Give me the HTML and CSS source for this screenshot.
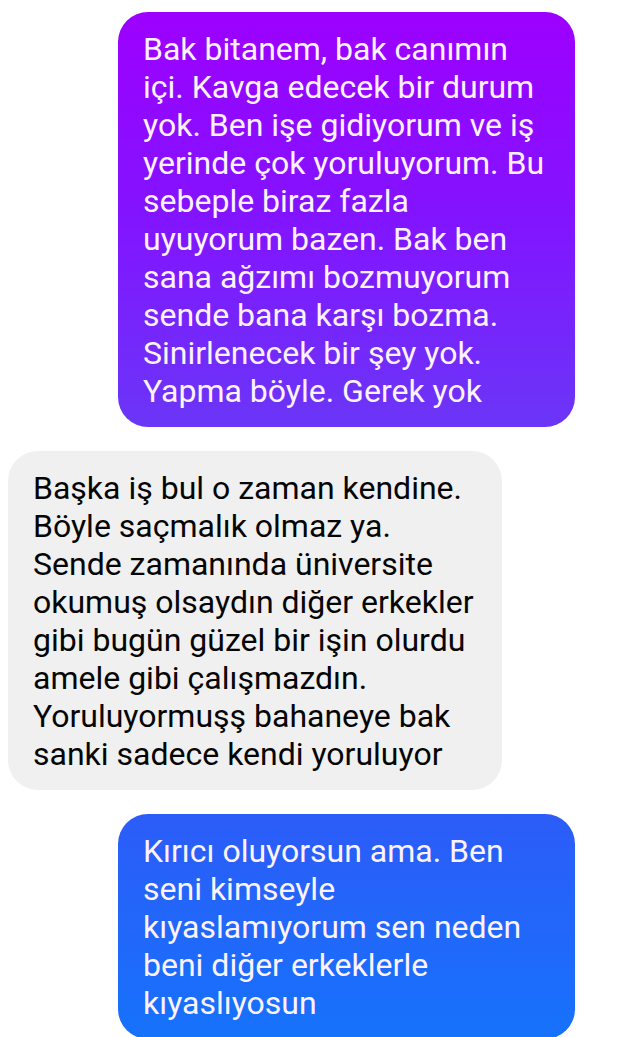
FILE: index.html
```html
<!DOCTYPE html>
<html>
<head>
  <title>Sohbet</title>
  <link rel="stylesheet" href="styles.css">
</head>
<body>
  <div class="chat">
    <!-- Gönderilen mesaj -->
    <div class="bubble sent purple">
      Bak bitanem, bak canımın içi. Kavga edecek bir durum yok. Ben işe gidiyorum ve iş yerinde çok yoruluyorum. Bu sebeple biraz fazla uyuyorum bazen. Bak ben sana ağzımı bozmuyorum sende bana karşı bozma. Sinirlenecek bir şey yok. Yapma böyle. Gerek yok
    </div>

    <!-- Gelen mesaj -->
    <div class="bubble received">
      Başka iş bul o zaman kendine. Böyle saçmalık olmaz ya. Sende zamanında üniversite okumuş olsaydın diğer erkekler gibi bugün güzel bir işin olurdu amele gibi çalışmazdın. Yoruluyormuşş bahaneye bak sanki sadece kendi yoruluyor
    </div>

    <div class="bubble sent blue">
      Kırıcı oluyorsun ama. Ben seni kimseyle kıyaslamıyorum sen neden beni diğer erkeklerle kıyaslıyosun
    </div>
  </div>
</body>
</html>
```

FILE: styles.css
```css
/* Genel */
body {
  margin: 0;
  padding: 0;
  background-color: #fff;
  font-family: Roboto, "Noto Sans", sans-serif;
}

.chat {
  display: flex;
  flex-direction: column;
  gap: 24px;
  padding-top: 12px;
}

/* Mesaj balonları */
.bubble {
  box-sizing: border-box;
  font-size: 32px;
  line-height: 38px;
  padding: 18px 22px 17px 25px;
  border-radius: 30px;
}

.sent {
  width: 457px;
  margin-left: 118px;
  color: #fdf2ff;
}

.purple {
  background: linear-gradient(to bottom, #9d00ff, #8214ff 50%, #6a36f7);
}

.blue {
  background: linear-gradient(to bottom, #2c5cf8, #1672fb);
}

.received {
  width: 494px;
  margin-left: 8px;
  background-color: #f0f0f0;
  color: #050505;
}
```
